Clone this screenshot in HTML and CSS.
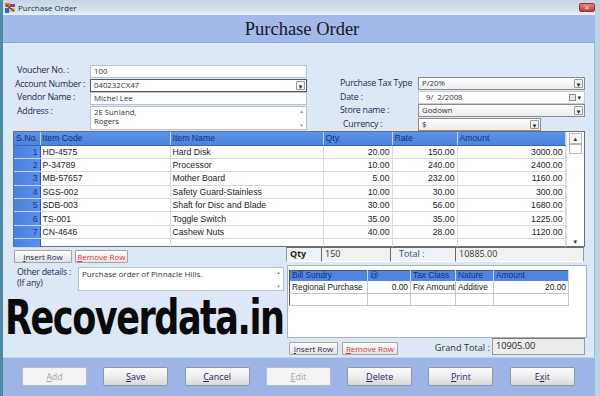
FILE: index.html
```html
<!DOCTYPE html>
<html>
<head>
<meta charset="utf-8">
<link rel="stylesheet" href="styles.css">
</head>
<body>
<div class="window">
  <div class="titlebar">
    <div class="tb-left">
      <svg class="tb-icon" width="12" height="12" viewBox="0 0 12 12">
        <rect x="1" y="1" width="5" height="4" fill="#e8702a"/>
        <rect x="6" y="2" width="5" height="3" fill="#7a3fa0"/>
        <rect x="1" y="6" width="4" height="5" fill="#3a62c8"/>
        <rect x="5" y="6" width="6" height="4" fill="#f0b43a"/>
        <path d="M2 3 L10 9" stroke="#5a2a8a" stroke-width="1.2"/>
      </svg>
      <span class="tb-title">Purchase Order</span>
    </div>
    <div class="tb-close">&#x2715;</div>
  </div>
  <div class="header"><h1 class="title">Purchase Order</h1></div>
  <div class="body">
    <div class="form">
      <div class="fgrid fleft">
        <span class="lbl">Voucher No. :</span><div class="inp">100</div>
        <span class="lbl lbl-acc">Account Number :</span><div class="inp sel focus"><span>040232CX47</span><span class="dd">&#9662;</span></div>
        <span class="lbl">Vendor Name :</span><div class="inp">Michel Lee</div>
        <span class="lbl">Address :</span><div class="inp area"><span>2E Sunland,<br>Rogers</span><span class="vsb"><i>&#9652;</i><i>&#9662;</i></span></div>
      </div>
      <div class="fgrid fright">
        <span class="lbl">Purchase Tax Type</span><div class="inp sel gray"><span>P/20%</span><span class="dd">&#9662;</span></div>
        <span class="lbl">Date :</span><div class="inp sel date"><span>&nbsp;&nbsp;9/&nbsp; 2/2008</span><span class="cal"><b></b>&#9662;</span></div>
        <span class="lbl">Store name :</span><div class="inp sel gray"><span>Godown</span><span class="dd">&#9662;</span></div>
        <span class="lbl lbl-cur">Currency :</span><div class="inp sel gray cur"><span>$</span><span class="dd">&#9662;</span></div>
      </div>
    </div>

    <div class="grid">
      <table class="items">
        <colgroup><col class="c-sno"><col class="c-code"><col class="c-name"><col class="c-qty"><col class="c-rate"><col class="c-amt"></colgroup>
        <thead><tr><th>S.No.</th><th>Item Code</th><th>Item Name</th><th>Qty.</th><th>Rate</th><th>Amount</th></tr></thead>
        <tbody>
          <tr><td class="sno">1</td><td>HD-4575</td><td>Hard Disk</td><td class="num">20.00</td><td class="num">150.00</td><td class="num">3000.00</td></tr>
          <tr><td class="sno">2</td><td>P-34789</td><td>Processor</td><td class="num">10.00</td><td class="num">240.00</td><td class="num">2400.00</td></tr>
          <tr><td class="sno">3</td><td>MB-57657</td><td>Mother Board</td><td class="num">5.00</td><td class="num">232.00</td><td class="num">1160.00</td></tr>
          <tr><td class="sno">4</td><td>SGS-002</td><td>Safety Guard-Stainless</td><td class="num">10.00</td><td class="num">30.00</td><td class="num">300.00</td></tr>
          <tr><td class="sno">5</td><td>SDB-003</td><td>Shaft for Disc and Blade</td><td class="num">30.00</td><td class="num">56.00</td><td class="num">1680.00</td></tr>
          <tr><td class="sno">6</td><td>TS-001</td><td>Toggle Switch</td><td class="num">35.00</td><td class="num">35.00</td><td class="num">1225.00</td></tr>
          <tr><td class="sno">7</td><td>CN-4646</td><td>Cashew Nuts</td><td class="num">40.00</td><td class="num">28.00</td><td class="num">1120.00</td></tr>
          <tr class="blank"><td class="sno"></td><td></td><td></td><td></td><td></td><td></td></tr>
        </tbody>
      </table>
      <div class="sb">
        <div class="sb-btn">&#9652;</div>
        <div class="sb-thumb"></div>
        <div class="sb-track"></div>
        <div class="sb-down">&#9662;</div>
      </div>
    </div>

    <div class="undergrid">
      <div class="rowbtns">
        <div class="sbtn ins"><u>I</u>nsert Row</div>
        <div class="sbtn rem"><u>R</u>emove Row</div>
      </div>
      <div class="totals">
        <div class="t-cell t-qty">Qty</div>
        <div class="t-cell t-qv">150</div>
        <div class="t-cell t-tl">Total :</div>
        <div class="t-cell t-tv">10885.00</div>
      </div>
    </div>

    <div class="lower">
      <div class="lower-left">
        <div class="other">
          <span class="lbl other-lbl">Other details :<br>(If any)</span>
          <div class="inp area other-area"><span>Purchase order of Pinnacle Hills.</span><span class="vsb"><i>&#9652;</i><i>&#9662;</i></span></div>
        </div>
        <div class="watermark">Recoverdata.in</div>
      </div>
      <div class="lower-right">
        <div class="panel">
          <table class="sundry">
            <colgroup><col class="s1"><col class="s2"><col class="s3"><col class="s4"><col class="s5"></colgroup>
            <thead><tr><th>Bill Sundry</th><th>@</th><th>Tax Class</th><th>Nature</th><th>Amount</th></tr></thead>
            <tbody>
              <tr><td>Regional Purchase</td><td class="num">0.00</td><td>Fix Amount</td><td>Additive</td><td class="num">20.00</td></tr>
              <tr><td></td><td></td><td></td><td></td><td></td></tr>
            </tbody>
          </table>
        </div>
        <div class="gt-row">
          <div class="sbtn ins ins2"><u>I</u>nsert Row</div>
          <div class="sbtn rem rem2"><u>R</u>emove Row</div>
          <span class="gt-lbl">Grand Total :</span>
          <div class="gt-val">10905.00</div>
        </div>
      </div>
    </div>
  </div>
  <div class="buttons">
    <div class="btn dis"><u>A</u>dd</div>
    <div class="btn"><u>S</u>ave</div>
    <div class="btn"><u>C</u>ancel</div>
    <div class="btn dis"><u>E</u>dit</div>
    <div class="btn"><u>D</u>elete</div>
    <div class="btn"><u>P</u>rint</div>
    <div class="btn">E<u>x</u>it</div>
  </div>
</div>
</body>
</html>
```

FILE: styles.css
```css
* { box-sizing: border-box; margin: 0; padding: 0; }
html, body { width: 600px; height: 396px; overflow: hidden; }
body { font-family: "Open Sans", "DejaVu Sans", sans-serif; background: #d3e7f0; }

.window {
  width: 600px; height: 396px;
  display: flex; flex-direction: column;
  border-left: 3px solid #4d8aa3;
  padding-right: 5px;
  background: linear-gradient(90deg, #cfe4ee, #b7d6e4);
}

/* title bar */
.titlebar {
  height: 15px; flex: none;
  display: flex; align-items: center; justify-content: space-between;
  background: linear-gradient(#c4d5e3, #d8e4ee 70%, #eaf1f6);
}
.tb-left { display: flex; align-items: center; gap: 2px; }
.tb-icon { display: block; margin-left: 1px; }
.tb-title { font-size: 8px; color: #1a2c44; }
.tb-close {
  width: 16px; height: 9px; margin-top: -1px;
  background: linear-gradient(#e98080, #c8383a);
  border: 1px solid #9a3030; border-radius: 2px;
  color: #fff; font-size: 7px; line-height: 7px; text-align: center; font-weight: bold;
}

/* header */
.header {
  height: 28px; flex: none;
  background: #a3b9e9;
  border-bottom: 1px solid #8aa3d2;
  display: flex; justify-content: center; align-items: flex-start;
}
.title {
  font-family: "Liberation Serif", "Times New Roman", serif;
  font-weight: normal; font-size: 18.5px; color: #101828;
  line-height: 18px; margin-top: 5px; margin-left: 6px;
}

/* body */
.body {
  height: 314px; flex: none;
  background: #dce8f6;
  border-right: 1px solid #8fc0d4;
  display: flex; flex-direction: column;
}

.form { height: 88px; flex: none; display: flex; align-items: flex-start; }
.fgrid { display: grid; align-items: center; }
.fleft {
  margin-left: 14px; margin-top: 22px;
  grid-template-columns: 73px 217px;
  grid-template-rows: 13px 13px 13px 24px;
  row-gap: 0.5px;
}
.fright {
  margin-left: 33px; margin-top: 34px;
  grid-template-columns: 78px 167px;
  grid-template-rows: 13px 13px 13px 13px;
  row-gap: 0.7px;
}
.lbl { font-size: 8.8px; letter-spacing: -0.25px; color: #1d2b58; white-space: nowrap; line-height: 11px; }
.lbl-acc { margin-left: -2px; }
.lbl-cur { margin-left: 3px; }
.fleft .lbl { align-self: start; }

.inp {
  height: 13px; background: #fff;
  border: 1px solid #b6c2d2;
  font-size: 7.8px; color: #333; line-height: 11px;
  padding-left: 3px;
  display: flex; justify-content: space-between; align-items: center;
  white-space: nowrap; overflow: hidden;
}
.inp.sel { padding-right: 1px; }
.inp.focus { border-color: #5a5a5a; }
.inp.gray { background: linear-gradient(#ffffff, #ececec); border-color: #8c8c8c; }
.inp.date { border-color: #c4ccd8; }
.inp.cur { width: 123px; }
.dd {
  width: 9px; height: 9px; font-size: 7px; line-height: 9px; text-align: center;
  color: #222; background: #f2f2f2; border: 1px solid #9a9a9a; border-radius: 1px;
}
.cal { display: flex; align-items: center; gap: 1px; font-size: 7px; color: #333; margin-right: 2px; }
.cal b { display: block; width: 7px; height: 7px; border: 1px solid #8a8a8a; background: #e6e6e6; }

.inp.area { height: 24px; align-items: flex-start; padding-top: 0; line-height: 9px; }
.inp.area > span:first-child { padding-top: 1px; }
.vsb { display: flex; flex-direction: column; justify-content: space-between; height: 100%; width: 9px; font-size: 5px; color: #8a8a8a; text-align: center; }
.vsb i { font-style: normal; line-height: 8px; }

/* grid */
.grid {
  margin-left: 10px; width: 572px; height: 116px; flex: none;
  border: 1px solid #6e6e6e; background: #fff;
  display: flex;
}
.items {
  width: 551px; border-collapse: collapse; table-layout: fixed;
  font-family: "Liberation Sans", Arial, sans-serif; font-size: 8.7px; color: #222;
  align-self: flex-start;
}
.c-sno { width: 26px; } .c-code { width: 130px; } .c-name { width: 153px; }
.c-qty { width: 69px; } .c-rate { width: 65px; } .c-amt { width: 108px; }
.items th {
  height: 13px; padding: 0 2px;
  background: linear-gradient(#5c92ea, #4a82de);
  color: #132f78; font-weight: normal; text-align: left;
  border-right: 1px solid #c8d6f2; border-bottom: 1px solid #3a66b8;
  white-space: nowrap; overflow: hidden;
}
.items td {
  height: 13.4px; padding: 0 2px;
  border-right: 1px solid #d8d8d8; border-bottom: 1px solid #d8d8d8;
  white-space: nowrap; overflow: hidden;
}
.items .blank td { height: 9px; border-bottom: none; }
.items td.sno {
  background: linear-gradient(90deg, #4a80dc, #5a90ea);
  color: #163a8a; text-align: right; border-bottom: 1px solid #c8d6f2; border-right: 1px solid #2f5aa8;
}
.num { text-align: right; }

.sb { width: 19px; display: flex; flex-direction: column; background: #fff; border-left: 1px solid #e4e4e4; }
.sb-btn, .sb-thumb {
  height: 11px; margin: 1px 2px 0 2px; border: 1px solid #b9b9b9; background: #fafafa;
  font-size: 7px; line-height: 9px; text-align: center; color: #333;
}
.sb-thumb { margin-top: 0; height: 10px; }
.sb-track { flex: 1; }
.sb-down { height: 9px; font-size: 7px; line-height: 9px; text-align: center; color: #333; }

/* under grid */
.undergrid { height: 16px; flex: none; display: flex; align-items: flex-start; }
.rowbtns { display: flex; gap: 3px; margin-left: 11px; margin-top: 3px; }
.sbtn {
  height: 13px; font-size: 8px; line-height: 11px; text-align: center;
  border: 1px solid #a4a4a4; border-radius: 1px;
  background: linear-gradient(#fdfdfd, #e2e2e2);
  color: #1e2a50; white-space: nowrap;
}
.ins { width: 58px; }
.rem { width: 53px; color: #d83c3c; }
.totals { display: flex; margin-left: auto; margin-right: 10px; height: 15px; }
.t-cell {
  height: 15px; font-size: 9px; line-height: 12px; padding-left: 3px;
  background: #eef2f6;
  border-top: 1px solid #6a6a6a; border-left: 1px solid #6a6a6a;
  border-bottom: 1px solid #fff; color: #333;
}
.t-qty { width: 35px; font-weight: bold; color: #1b1b1b; border-left: 1px solid #9a9a9a; }
.t-qv { width: 69px; background: #f1f1f1; }
.t-tl { width: 65px; padding-left: 8px; color: #3a4a6a; }
.t-tv { width: 129px; background: #f1f1f1; border-right: 1px solid #9a9a9a; }

/* lower */
.lower { flex: 1; display: flex; }
.lower-left { width: 284px; display: flex; flex-direction: column; }
.other { display: flex; margin-top: 4px; margin-left: 14px; }
.other-lbl { width: 61px; line-height: 11px; }
.other-area { width: 206px; height: 30px; font-size: 8px; padding-left: 3px; line-height: 10px; }
.watermark {
  font-family: "DejaVu Sans", sans-serif; font-weight: bold;
  font-size: 48px; line-height: 44px; color: #0a0a0a;
  letter-spacing: -2px; white-space: nowrap;
  transform: scaleX(0.73); transform-origin: left center;
  margin-left: 2px; margin-top: 4px;
}
.lower-right { width: 300px; display: flex; flex-direction: column; }
.panel {
  height: 73px; margin-top: 2px; background: #fff;
  border: 1px solid #a7b3c2; padding: 4px 0 0 1px;
}
.sundry {
  width: 279px; border-collapse: collapse; table-layout: fixed;
  font-family: "Liberation Sans", Arial, sans-serif; font-size: 8.4px; color: #222;
  border: 1px solid #555;
}
.s1 { width: 78px; } .s2 { width: 43px; } .s3 { width: 45px; } .s4 { width: 38px; } .s5 { width: 75px; }
.sundry th {
  height: 10px; padding: 0 2px; font-weight: normal; text-align: left;
  background: #4f86e2; color: #132f78; border-right: 1px solid #c8d6f2;
  white-space: nowrap; overflow: hidden; line-height: 9px;
}
.sundry td {
  height: 12.5px; padding: 0 2px; border-right: 1px solid #c4c4c4; border-bottom: 1px solid #c4c4c4;
  white-space: nowrap; overflow: hidden;
}
.gt-row { display: flex; align-items: flex-start; height: 17px; }
.ins2 { width: 49px; margin-left: 2px; margin-top: 4px; }
.rem2 { width: 56px; margin-left: 4px; margin-top: 4px; }
.gt-lbl { margin-left: auto; font-size: 9.2px; color: #333; margin-top: 3px; margin-right: 2px; }
.gt-val {
  width: 93px; height: 17px; margin-right: 2px;
  background: #ececec; border: 1px solid #9c9c9c; border-top-color: #777;
  font-size: 9.2px; line-height: 13px; padding-left: 3px; color: #222;
}

/* bottom buttons */
.buttons {
  height: 39px; flex: none;
  background: #9db5e6;
  border-top: 1px solid #c3d2ef;
  display: flex; gap: 16.3px;
  padding: 9px 0 0 19px;
}
.btn {
  width: 65px; height: 19px;
  background: linear-gradient(#fbfbfb, #ededed 50%, #d9d9d9);
  border: 1px solid #8f96a4; border-radius: 2px;
  font-size: 9px; line-height: 17px; text-align: center; color: #1b2a5c;
}
.btn.dis { background: #f3f3f3; color: #a8a8a8; border-color: #b8bccc; }
```
